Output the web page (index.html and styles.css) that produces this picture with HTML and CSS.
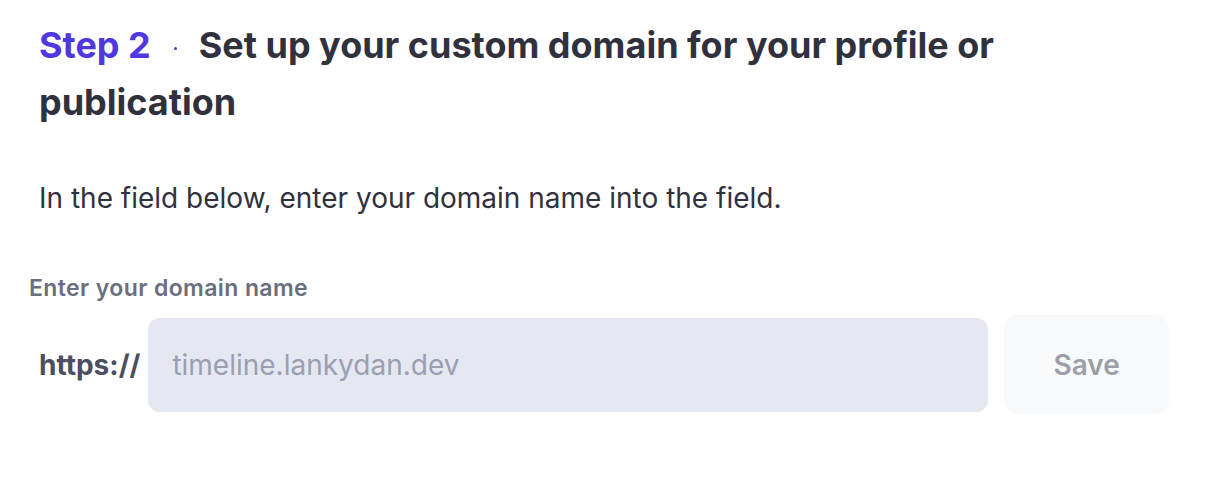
FILE: index.html
```html
<!DOCTYPE html>
<html>
<head>
<meta charset="utf-8">
<link rel="stylesheet" href="styles.css">
</head>
<body>
<div class="page">
  <h2 class="title"><span class="step">Step 2</span><span class="dot"></span><span class="title-text">Set up your custom domain for your profile or publication</span></h2>
  <p class="desc">In the field below, enter your domain name into the field.</p>
  <label class="label" for="domain">Enter your domain name</label>
  <div class="row">
    <span class="prefix">https://</span>
    <input id="domain" class="input" type="text" placeholder="timeline.lankydan.dev">
    <button class="save">Save</button>
  </div>
</div>
</body>
</html>
```
FILE: styles.css
```css
* { box-sizing: border-box; }
html, body { margin: 0; padding: 0; background: #fff; }
body { font-family: Inter, "Noto Sans", sans-serif; color: #333340; }
.page { padding: 17px 39px 0 29px; width: 1208px; }
.title {
  margin: 0 0 0 10px;
  font-size: 36px;
  line-height: 57px;
  font-weight: 700;
  color: #31313e;
  max-width: 980px;
}
.step { color: #4f38e0; }
.dot {
  display: inline-block;
  width: 3px;
  height: 3px;
  border-radius: 50%;
  background: #4f38e0;
  margin: 0 22px 0 23px;
  vertical-align: middle;
}
.desc {
  margin: 47px 0 0 10px;
  font-size: 28px;
  line-height: 40px;
  color: #31313e;
}
.label {
  display: block;
  margin-top: 55px;
  font-size: 23px;
  letter-spacing: 0.4px;
  font-weight: 600;
  color: #6b6f7d;
  line-height: 30px;
}
.row {
  display: flex;
  align-items: center;
  margin-top: 12px;
  padding-left: 10px;
}
.prefix {
  font-size: 28px;
  font-weight: 700;
  color: #4b4f5e;
  margin-right: 8px;
}
.input {
  flex: 0 0 840px;
  height: 94px;
  border: none;
  border-radius: 12px;
  background: #e5e7f1;
  padding: 0 24px;
  font-family: Inter, sans-serif;
  font-size: 28px;
  color: #333340;
  outline: none;
}
.input::placeholder { color: #9a9fb1; }
.save {
  margin-left: 16px;
  width: 165px;
  height: 99px;
  border: none;
  border-radius: 14px;
  background: #f8f9fb;
  font-family: Inter, sans-serif;
  font-size: 28px;
  font-weight: 600;
  color: #9c9fa7;
}
```
